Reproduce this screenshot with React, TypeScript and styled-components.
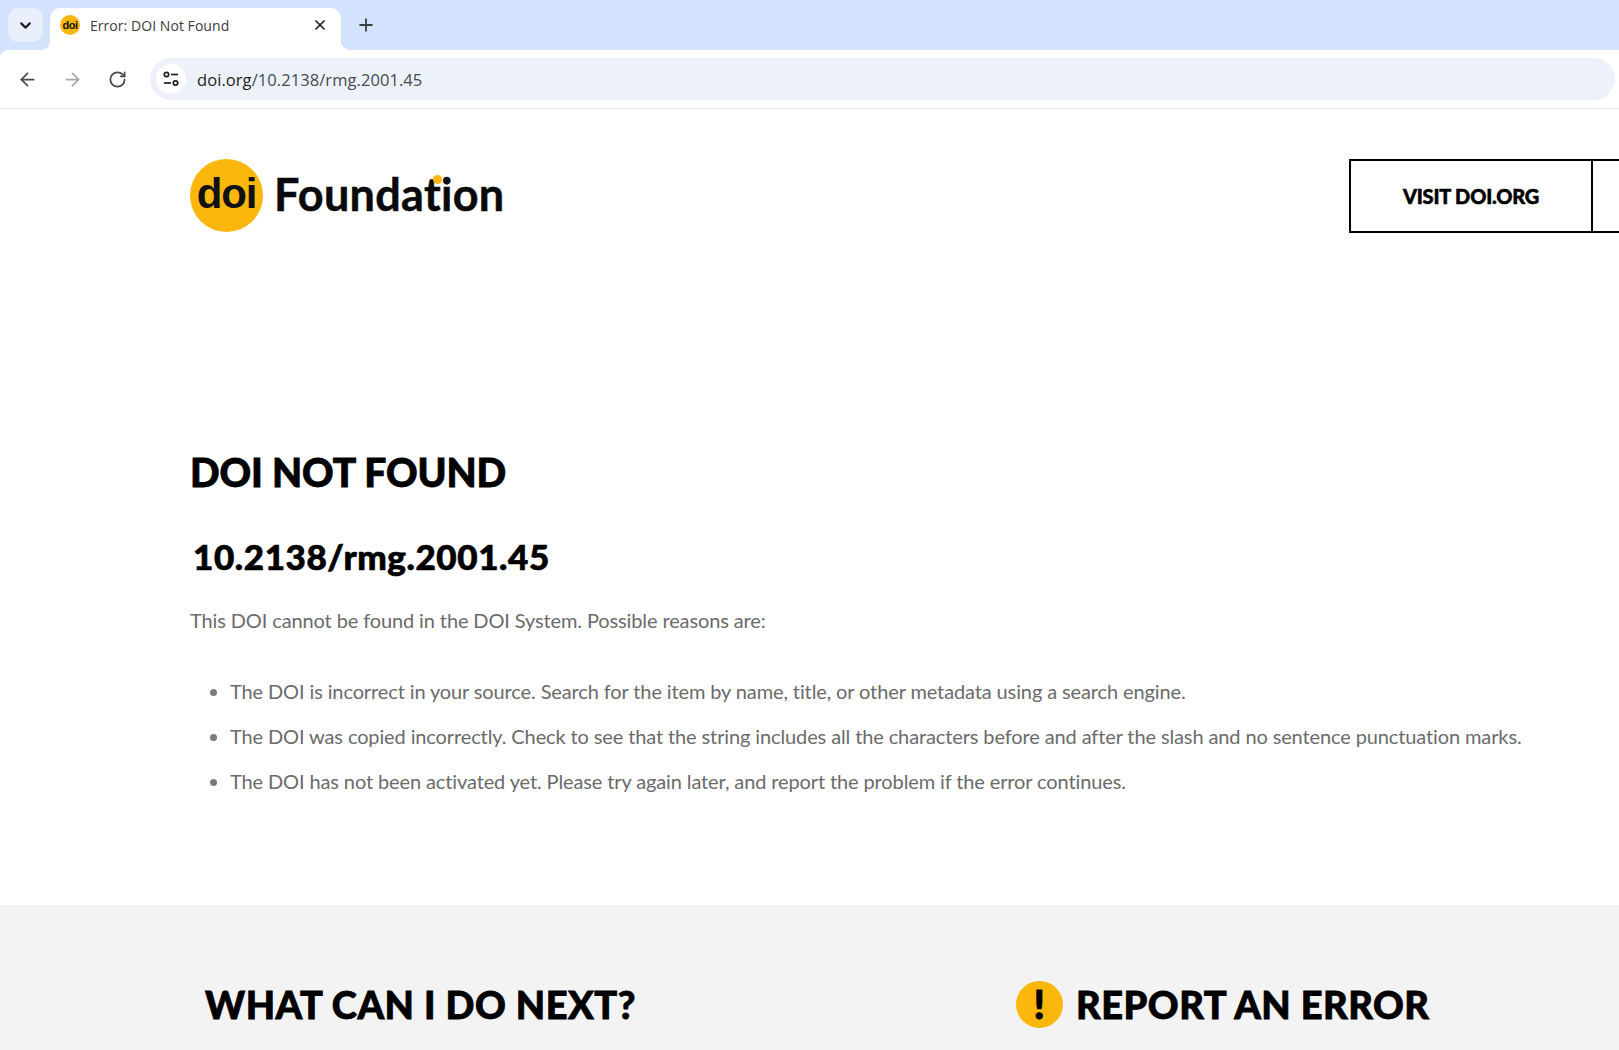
import React from 'react'
import styled, { createGlobalStyle } from 'styled-components'
import { ArrowLeft, ArrowRight, ChevronDown, Plus, RotateCw, X } from 'lucide-react'

const GlobalStyle = createGlobalStyle`
  html, body {
    margin: 0;
    padding: 0;
    height: 1050px;
    overflow: hidden;
    background: #fff;
  }
  * {
    box-sizing: border-box;
  }
`

const Window = styled.div`
  width: 1619px;
  height: 1050px;
  overflow: hidden;
  display: flex;
  flex-direction: column;
  font-family: 'Lato', 'Liberation Sans', sans-serif;
`

const TabStrip = styled.div`
  height: 50px;
  background: #d3e3fd;
  display: flex;
  align-items: flex-end;
  padding-left: 8px;
`

const TabSwitcher = styled.div`
  width: 35px;
  height: 34px;
  margin-bottom: 8px;
  border-radius: 10px;
  background: #e9f0fc;
  color: #1f1f1f;
  display: flex;
  align-items: center;
  justify-content: center;
`

const Tab = styled.div`
  position: relative;
  width: 291px;
  height: 42px;
  margin-left: 7px;
  padding: 0 13px 8px 10px;
  background: #fff;
  border-radius: 10px 10px 0 0;
  display: flex;
  align-items: center;
  &::before,
  &::after {
    content: '';
    position: absolute;
    bottom: 0;
    width: 10px;
    height: 10px;
  }
  &::before {
    left: -10px;
    background: radial-gradient(circle at 0 0, #d3e3fd 10px, #fff 10.5px);
  }
  &::after {
    right: -10px;
    background: radial-gradient(circle at 100% 0, #d3e3fd 10px, #fff 10.5px);
  }
`

const Favicon = styled.div`
  width: 20px;
  height: 20px;
  border-radius: 50%;
  background: #fbb70c;
  color: #111;
  font-family: 'Liberation Sans', sans-serif;
  font-size: 11px;
  font-weight: 700;
  letter-spacing: -0.5px;
  display: flex;
  align-items: center;
  justify-content: center;
  flex: none;
`

const TabTitle = styled.span`
  margin-left: 10px;
  flex: 1;
  font-family: 'Open Sans', sans-serif;
  font-size: 14px;
  letter-spacing: 0.05px;
  color: #3c3d40;
  white-space: nowrap;
`

const TabClose = styled.div`
  color: #1f1f1f;
  display: flex;
`

const NewTab = styled.div`
  margin: 0 0 8px 11px;
  width: 28px;
  height: 34px;
  color: #3c4043;
  display: flex;
  align-items: center;
  justify-content: center;
`

const Toolbar = styled.div`
  height: 59px;
  background: #d3e3fd;
  flex: none;
`

const ToolbarInner = styled.div`
  height: 100%;
  background: #fff;
  border-radius: 8px 0 0 0;
  border-bottom: 1px solid #e3e3e3;
  display: flex;
  align-items: center;
  padding: 0 4px 0 15px;
`

const NavButton = styled.div<{ $dim?: boolean }>`
  width: 24px;
  height: 24px;
  margin-right: 21px;
  color: ${({ $dim }) => ($dim ? '#a6a7a9' : '#47494c')};
  display: flex;
  align-items: center;
  justify-content: center;
`

const Omnibox = styled.div`
  flex: 1;
  height: 42px;
  border-radius: 21px;
  background: #ecf1fa;
  display: flex;
  align-items: center;
  padding-left: 6px;
`

const SiteIcon = styled.div`
  width: 30px;
  height: 30px;
  border-radius: 50%;
  background: #fff;
  display: flex;
  align-items: center;
  justify-content: center;
  color: #1f1f1f;
`

const Url = styled.div`
  margin-left: 11px;
  font-family: 'Open Sans', sans-serif;
  font-size: 16.5px;
  letter-spacing: 0.07px;
  color: #474b50;
  span {
    color: #1f1f1f;
  }
`

const Page = styled.div`
  flex: 1;
  display: flex;
  flex-direction: column;
  min-height: 0;
`

const Header = styled.header`
  display: flex;
  justify-content: space-between;
  align-items: flex-start;
  padding: 50px 0 0 190px;
  height: 269px;
`

const Logo = styled.div`
  display: flex;
  align-items: center;
  gap: 11px;
`

const LogoMark = styled.div`
  width: 73px;
  height: 73px;
  border-radius: 50%;
  background: #fbb70c;
  color: #111;
  font-family: 'Liberation Sans', sans-serif;
  font-size: 42px;
  font-weight: 700;
  letter-spacing: -1.2px;
  display: flex;
  align-items: center;
  justify-content: center;
  padding-bottom: 3px;
`

const LogoText = styled.div`
  position: relative;
  font-family: 'Lato', sans-serif;
  font-size: 45px;
  font-weight: 700;
  color: #0a0a0a;
  letter-spacing: 0.3px;
  margin-top: -3px;
  -webkit-text-stroke: 0.5px #0a0a0a;
`

const LogoDot = styled.i`
  position: absolute;
  left: 159px;
  top: 8px;
  width: 9px;
  height: 9px;
  border-radius: 50%;
  background: #fbb70c;
  -webkit-text-stroke: 0;
`

const Nav = styled.nav`
  display: flex;
  flex: none;
  width: 270px;
  overflow: hidden;
`

const NavLink = styled.a`
  flex: none;
  width: 244px;
  height: 74px;
  border: 2px solid #000;
  font-size: 20px;
  font-weight: 900;
  color: #000;
  display: flex;
  align-items: center;
  justify-content: center;
  letter-spacing: -0.2px;
  -webkit-text-stroke: 0.5px #000;
  & + & {
    margin-left: -2px;
  }
`

const Main = styled.main`
  padding: 71px 0 0 191px;
  height: 527px;
`

const Title = styled.h1`
  margin: 0 0 0 -1px;
  font-size: 39px;
  font-weight: 900;
  line-height: 46px;
  color: #000;
  letter-spacing: -0.1px;
  -webkit-text-stroke: 0.8px #000;
`

const Doi = styled.h2`
  margin: 40px 0 0 2px;
  font-size: 35px;
  font-weight: 900;
  line-height: 42px;
  color: #000;
  letter-spacing: 0.6px;
  -webkit-text-stroke: 0.7px #000;
`

const Lead = styled.p`
  margin: 27px 0 0 -1px;
  font-size: 20px;
  line-height: 32px;
  color: #6b6b6b;
  letter-spacing: -0.12px;
`

const Reasons = styled.ul`
  margin: 33px 0 0;
  padding: 0 0 0 39px;
  list-style: disc;
`

const Reason = styled.li`
  height: 45px;
  font-size: 20px;
  line-height: 45px;
  color: #6b6b6b;
  letter-spacing: -0.12px;
  white-space: nowrap;
  &::marker {
    color: #7a7a7a;
  }
`

const Footer = styled.section`
  flex: 1;
  background: #f3f3f3;
  display: grid;
  grid-template-columns: 811px 1fr;
  padding: 53px 0 0 205px;
`

const FooterHeading = styled.h2`
  margin: 0;
  font-size: 38px;
  font-weight: 900;
  line-height: 50px;
  color: #000;
  letter-spacing: 0.5px;
  white-space: nowrap;
  display: flex;
  align-items: center;
  gap: 13px;
  -webkit-text-stroke: 0.8px #000;
`

const Alert = styled.span`
  width: 47px;
  height: 47px;
  border-radius: 50%;
  background: #fbb70c;
  color: #000;
  font-size: 40px;
  font-weight: 900;
  display: flex;
  align-items: center;
  justify-content: center;
  flex: none;
`

const reasons = [
  'The DOI is incorrect in your source. Search for the item by name, title, or other metadata using a search engine.',
  'The DOI was copied incorrectly. Check to see that the string includes all the characters before and after the slash and no sentence punctuation marks.',
  'The DOI has not been activated yet. Please try again later, and report the problem if the error continues.',
]

const App = () => (
  <Window>
    <GlobalStyle />
    <TabStrip>
      <TabSwitcher>
        <ChevronDown size={17} strokeWidth={3} />
      </TabSwitcher>
      <Tab>
        <Favicon>doi</Favicon>
        <TabTitle>Error: DOI Not Found</TabTitle>
        <TabClose>
          <X size={16} strokeWidth={2.6} />
        </TabClose>
      </Tab>
      <NewTab>
        <Plus size={20} strokeWidth={2.2} />
      </NewTab>
    </TabStrip>
    <Toolbar>
      <ToolbarInner>
        <NavButton>
          <ArrowLeft size={21} strokeWidth={2} />
        </NavButton>
        <NavButton $dim>
          <ArrowRight size={21} strokeWidth={2} />
        </NavButton>
        <NavButton>
          <RotateCw size={19} strokeWidth={2.2} />
        </NavButton>
        <Omnibox>
          <SiteIcon>
            <svg width="18" height="18" viewBox="0 0 18 18" fill="none" stroke="currentColor" strokeWidth="1.7">
              <circle cx="4.5" cy="4.5" r="2.2" />
              <path d="M9 4.5h7" />
              <circle cx="13.5" cy="13" r="2.2" />
              <path d="M2 13h7" />
            </svg>
          </SiteIcon>
          <Url>
            <span>doi.org</span>/10.2138/rmg.2001.45
          </Url>
        </Omnibox>
      </ToolbarInner>
    </Toolbar>
    <Page>
      <Header>
        <Logo>
          <LogoMark>doi</LogoMark>
          <LogoText>
            Foundation
            <LogoDot />
          </LogoText>
        </Logo>
        <Nav>
          <NavLink>VISIT DOI.ORG</NavLink>
          <NavLink />
        </Nav>
      </Header>
      <Main>
        <Title>DOI NOT FOUND</Title>
        <Doi>10.2138/rmg.2001.45</Doi>
        <Lead>This DOI cannot be found in the DOI System. Possible reasons are:</Lead>
        <Reasons>
          {reasons.map((reason) => (
            <Reason key={reason}>{reason}</Reason>
          ))}
        </Reasons>
      </Main>
      <Footer>
        <FooterHeading>WHAT CAN I DO NEXT?</FooterHeading>
        <FooterHeading>
          <Alert>!</Alert>
          REPORT AN ERROR
        </FooterHeading>
      </Footer>
    </Page>
  </Window>
)

export default App
